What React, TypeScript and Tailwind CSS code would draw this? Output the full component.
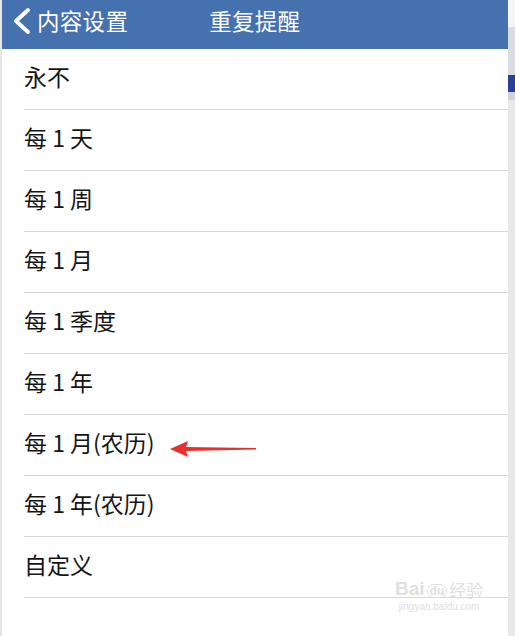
import React from "react";

const options = [
  "永不",
  "每 1 天",
  "每 1 周",
  "每 1 月",
  "每 1 季度",
  "每 1 年",
  "每 1 月(农历)",
  "每 1 年(农历)",
  "自定义",
];

const font = { fontFamily: '"Noto Sans CJK SC", "Noto Sans", sans-serif' };

export default function App() {
  return (
    <div className="flex w-[515px] h-[636px] overflow-hidden bg-white" style={font}>
      <div className="w-[2px] bg-[#e6e6e6]" />

      <div className="relative flex-1 flex flex-col bg-white">
        <div className="h-[49px] bg-[#4571ae] flex items-start pt-[8px] text-white">
          <svg width="22" height="28" viewBox="0 0 22 28" className="ml-[8px] mt-[-1px]">
            <path d="M18 3 L6 14 L18 25" fill="none" stroke="white" strokeWidth="4" strokeLinecap="round" strokeLinejoin="round" />
          </svg>
          <span className="text-[22.5px] leading-[24px] ml-[5px] tracking-[0.3px]">内容设置</span>
          <span className="text-[22.5px] leading-[24px] ml-[81px] tracking-[0.3px]">重复提醒</span>
        </div>

        <div className="flex flex-col pl-[22px]">
          {options.map((label, i) => (
            <div key={i} className="relative h-[61px] border-b border-[#d6d6d6] flex items-center">
              <span className="text-[23px] leading-none text-[#151515] mt-[-6px]">{label}</span>
              {i === 6 && (
                <svg width="90" height="16" viewBox="0 0 90 16" className="absolute left-[146px] top-[26px]">
                  <path d="M0 8 L18 0 L16 6 L86 7 L86 8.5 L16 10 L18 16 Z" fill="#e8302f" />
                </svg>
              )}
            </div>
          ))}
        </div>

        <div className="absolute left-[393px] top-[579px] flex flex-col items-center text-[#e0e0e0] leading-none">
          <div className="flex items-end gap-[2px]">
            <span className="text-[19px] font-bold" style={{ fontFamily: '"Liberation Sans", sans-serif' }}>Bai</span>
            <span className="text-[12px] font-bold rounded-full border border-[#e0e0e0] px-[2px]" style={{ fontFamily: '"Liberation Sans", sans-serif' }}>du</span>
            <span className="text-[17px]">经验</span>
          </div>
          <span className="text-[10px] mt-[4px]" style={{ fontFamily: '"Liberation Sans", sans-serif' }}>jingyan.baidu.com</span>
        </div>
      </div>

      <div className="w-[7px] bg-[#e9e9e9] flex flex-col">
        <div className="h-[27px] bg-[#f4f4f4]" />
        <div className="h-[48px] bg-[#d9dde2]" />
        <div className="h-[17px] bg-[#2a3f9a]" />
        <div className="h-[8px] bg-[#d0d4d8]" />
        <div className="flex-1 bg-[#e8e8e8]" />
      </div>
    </div>
  );
}
